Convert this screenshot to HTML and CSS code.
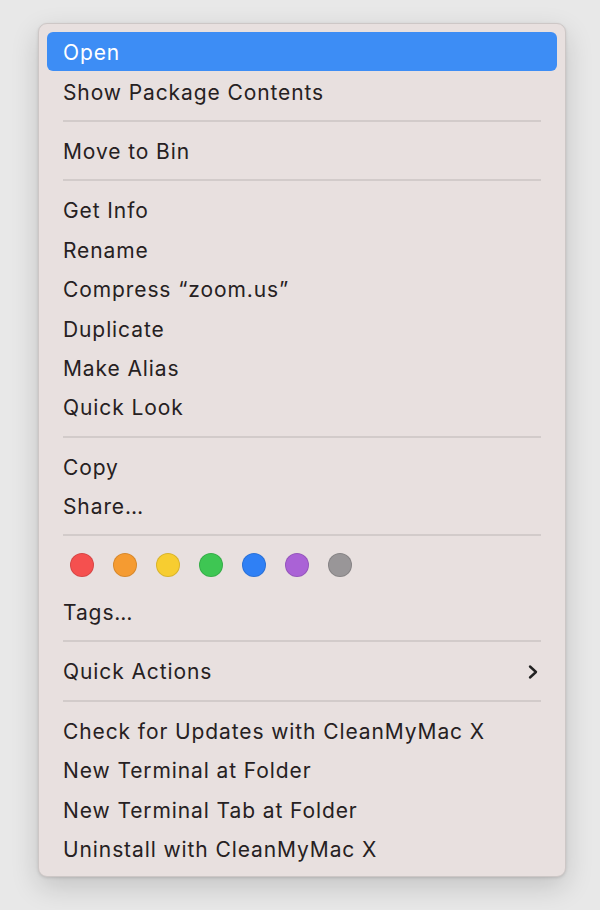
FILE: index.html
```html
<!DOCTYPE html>
<html>
<head>
<meta charset="utf-8">
<link rel="stylesheet" href="styles.css">
</head>
<body>
<div class="menu">
  <div class="item active">Open</div>
  <div class="item">Show Package Contents</div>
  <div class="sep"></div>
  <div class="item">Move to Bin</div>
  <div class="sep"></div>
  <div class="item">Get Info</div>
  <div class="item">Rename</div>
  <div class="item">Compress “zoom.us”</div>
  <div class="item">Duplicate</div>
  <div class="item">Make Alias</div>
  <div class="item">Quick Look</div>
  <div class="sep"></div>
  <div class="item">Copy</div>
  <div class="item">Share…</div>
  <div class="sep"></div>
  <div class="tags">
    <span class="dot red"></span>
    <span class="dot orange"></span>
    <span class="dot yellow"></span>
    <span class="dot green"></span>
    <span class="dot blue"></span>
    <span class="dot purple"></span>
    <span class="dot gray"></span>
  </div>
  <div class="item">Tags…</div>
  <div class="sep"></div>
  <div class="item submenu">
    <span>Quick Actions</span>
    <svg class="chev" width="12" height="16" viewBox="0 0 12 16"><path d="M3 2.5 L9 8 L3 13.5" fill="none" stroke="#222" stroke-width="2.4" stroke-linecap="round" stroke-linejoin="round"/></svg>
  </div>
  <div class="sep"></div>
  <div class="item">Check for Updates with CleanMyMac X</div>
  <div class="item">New Terminal at Folder</div>
  <div class="item">New Terminal Tab at Folder</div>
  <div class="item">Uninstall with CleanMyMac X</div>
</div>
</body>
</html>
```

FILE: styles.css
```css
html {
  background: #e8e8e8;
}
body {
  margin: 0;
  padding: 23px 34px 35px 38px;
  font-family: "Inter", "Roboto", "Liberation Sans", sans-serif;
}
.menu {
  width: 510px;
  padding: 8px 8px 8px 8px;
  background: #e8e0df;
  border: 1px solid #cdc7c6;
  border-radius: 9px;
  box-shadow: 0 10px 28px rgba(0, 0, 0, 0.16), 0 1px 3px rgba(0, 0, 0, 0.12);
}
.item {
  box-sizing: border-box;
  height: 39.4px;
  display: flex;
  align-items: center;
  padding: 2px 16px 0 16px;
  font-size: 21px;
  letter-spacing: 0.9px;
  color: #262122;
  border-radius: 6px;
  white-space: nowrap;
}
.item.active {
  background: #3d8df5;
  color: #ffffff;
}
.submenu {
  justify-content: space-between;
  padding-right: 18px;
}
.sep {
  height: 20px;
  display: flex;
  align-items: center;
  padding: 0 16px;
}
.sep::before {
  content: "";
  flex: 1;
  height: 2px;
  background: #d2cbca;
}
.tags {
  height: 46.6px;
  display: flex;
  align-items: flex-start;
  gap: 19px;
  padding: 8px 0 0 23px;
  box-sizing: border-box;
}
.dot {
  width: 24px;
  height: 24px;
  border-radius: 50%;
  box-sizing: border-box;
  border: 1px solid rgba(0, 0, 0, 0.12);
}
.red { background: #f5504f; }
.orange { background: #f59b31; }
.yellow { background: #f7cd30; }
.green { background: #3ec653; }
.blue { background: #2f80f5; }
.purple { background: #aa62d6; }
.gray { background: #999698; }
```
